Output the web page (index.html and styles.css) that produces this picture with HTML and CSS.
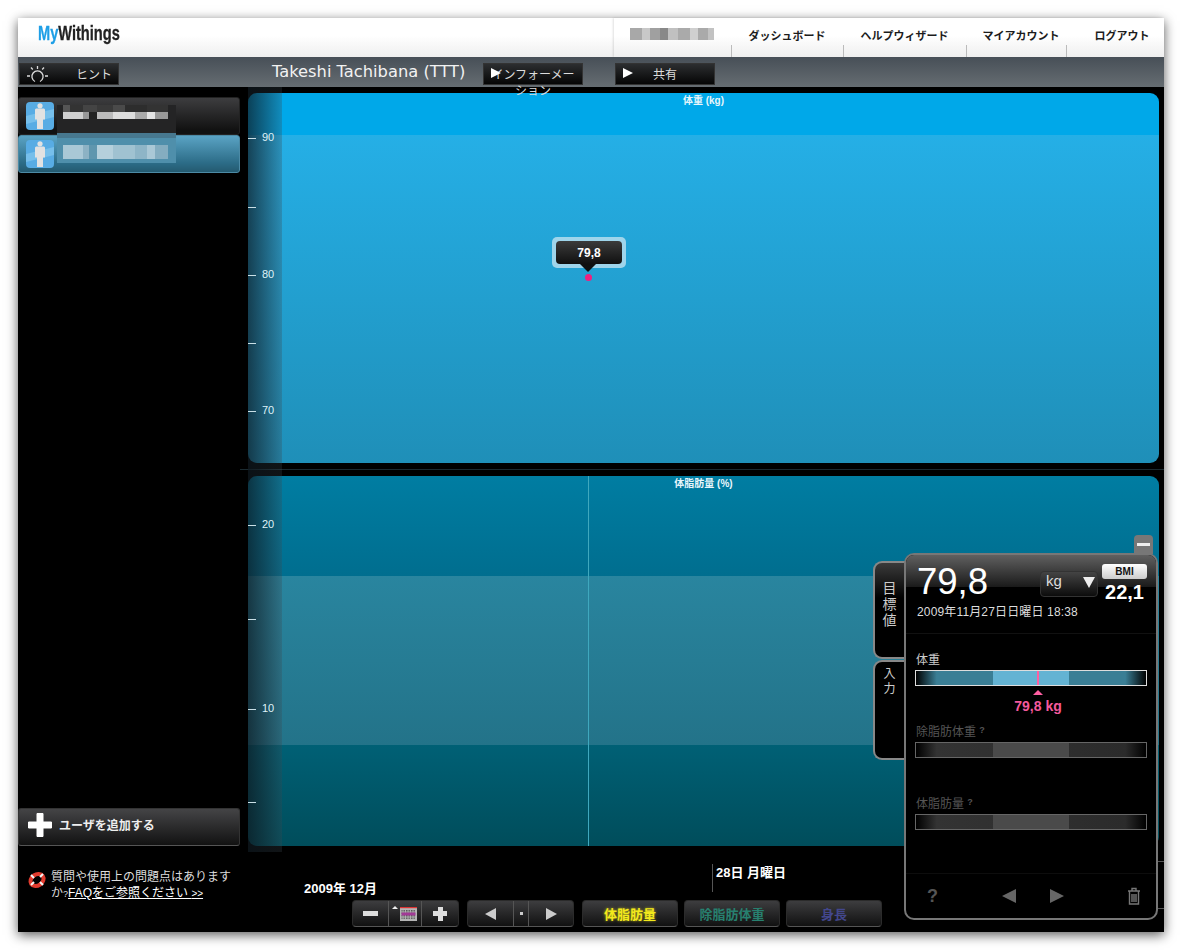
FILE: index.html
```html
<!DOCTYPE html>
<html lang="ja">
<head>
<meta charset="utf-8">
<title>MyWithings</title>
<link rel="stylesheet" href="styles.css">
</head>
<body>
<div class="window">
  <header class="header">
    <div class="logo"><span class="logo-my">My</span>Withings</div>
    <nav class="nav">
      <div class="nav-item nav-user"><span class="mosaic-nav"></span></div>
      <a class="nav-item nav-w2">ダッシュボード</a>
      <a class="nav-item nav-w3">ヘルプウィザード</a>
      <a class="nav-item nav-w4">マイアカウント</a>
      <a class="nav-item nav-w5">ログアウト</a>
    </nav>
  </header>

  <div class="toolbar">
    <button class="tool-btn tool-hint">
      <svg class="bulb" width="32" height="20" viewBox="0 0 32 20"><g fill="none" stroke="#dcdcdc" stroke-width="1.3"><path d="M14 17.500a5.600 5.600 0 1 1 5 0"/><path d="M16.500 2v3M10 3.500l1.800 2M23 3.500l-1.800 2M6 12h3M24 12h3"/></g></svg>
      <span class="tool-label-hint">ヒント</span>
    </button>
    <h1 class="title">Takeshi Tachibana (TTT)</h1>
    <button class="tool-btn tool-info">
      <span class="play"></span>
      <span class="tool-info-text">インフォーメーション</span>
    </button>
    <button class="tool-btn tool-share">
      <span class="play"></span>
      <span class="tool-label-share">共有</span>
    </button>
  </div>

  <div class="main">
    <aside class="sidebar">
      <div class="user-row">
        <svg class="avatar" width="28" height="28" viewBox="0 0 28 28"><use href="#person"/></svg>
        <span class="mosaic"></span>
      </div>
      <div class="user-row user-active">
        <svg class="avatar" width="28" height="28" viewBox="0 0 28 28"><use href="#person"/></svg>
        <span class="mosaic mosaic-active"></span>
      </div>
      <button class="add-user">
        <svg width="26" height="26" viewBox="0 0 26 26"><path d="M10 1.500h6v8.500h8.500v6H16v8.500h-6V16H1.500v-6H10z" fill="#fff" stroke="#fff" stroke-linejoin="round"/></svg>
        <span>ユーザを追加する</span>
      </button>
      <div class="help">
        <svg class="buoy" width="20" height="20" viewBox="0 0 20 20"><ellipse cx="10" cy="10" rx="7" ry="5.500" transform="rotate(-35 10 10)" fill="none" stroke="#e23b2e" stroke-width="4"/><path d="M4 5l3 3M13 12l3 3M16 4l-3 3M4 15l3-3" stroke="#f4f4f4" stroke-width="2"/></svg>
        <p class="help-text">質問や使用上の問題点はありますか<span class="narrow">?</span><a class="help-link">FAQをご参照ください <span class="chev">&gt;&gt;</span></a></p>
      </div>
    </aside>

    <section class="stage">
      <div class="chart chart-top">
        <div class="chart-title">体重 <b>(kg)</b></div>
        <div class="band band-t1"></div>
        <div class="band band-t2"></div>
        <div class="tick tick-major t90"><i></i>90</div>
        <div class="tick t85"><i></i></div>
        <div class="tick tick-major t80"><i></i>80</div>
        <div class="tick t75"><i></i></div>
        <div class="tick tick-major t70"><i></i>70</div>
        <div class="bubble"><span class="bubble-inner">79,8</span></div>
        <span class="dot"></span>
      </div>
      <div class="separator"></div>
      <div class="chart chart-bottom">
        <div class="chart-title">体脂肪量 <b>(%)</b></div>
        <div class="band band-b1"></div>
        <div class="band band-b2"></div>
        <div class="band band-b3"></div>
        <span class="cursor"></span>
        <div class="tick tick-major t20"><i></i>20</div>
        <div class="tick t15"><i></i></div>
        <div class="tick tick-major t10"><i></i>10</div>
        <div class="tick t5"><i></i></div>
      </div>
      <div class="axis-shade"></div>

      <footer class="footer">
        <span class="date-month">2009年 12月</span>
        <span class="date-rule"></span>
        <span class="date-day">28日 月曜日</span>
        <span class="edge-mark edge-a"></span>
        <span class="edge-mark edge-b"></span>
        <div class="controls">
          <div class="btn-group group-zoom">
            <span class="seg seg-z1"><i class="minus"></i></span>
            <span class="seg seg-z2">
              <svg width="28" height="18" viewBox="0 0 28 18"><defs><pattern id="cal" width="2.500" height="2.500" patternUnits="userSpaceOnUse"><rect width="1.500" height="1.500" fill="#555"/></pattern></defs><path d="M1 4l3-3 3 3z" fill="#eee"/><rect x="9" y="2" width="17" height="14" fill="#b5b5b5"/><rect x="9" y="2" width="17" height="1.200" fill="#d33"/><rect x="10.500" y="5" width="14" height="9" fill="url(#cal)"/><rect x="10.500" y="7.500" width="14" height="3" fill="#a23a96"/></svg>
            </span>
            <span class="seg seg-z3"><i class="plus"></i></span>
          </div>
          <div class="btn-group group-nav">
            <span class="seg seg-n1"><i class="tri-left"></i></span>
            <span class="seg seg-n2"><i class="mid-dot"></i></span>
            <span class="seg seg-n3"><i class="tri-right"></i></span>
          </div>
          <button class="metric metric-fat">体脂肪量</button>
          <button class="metric metric-lean">除脂肪体重</button>
          <button class="metric metric-height">身長</button>
        </div>
      </footer>

      <div class="panel-min"><i></i></div>
      <div class="tab tab-goal">目<br>標<br>値</div>
      <div class="tab tab-input">入<br>力</div>

      <div class="panel">
        <div class="panel-head">
          <div class="panel-value">79,8</div>
          <div class="unit"><span>kg</span><i class="unit-arrow"></i></div>
          <div class="bmi">
            <span class="bmi-pill">BMI</span>
            <span class="bmi-value">22,1</span>
          </div>
        </div>
        <div class="panel-date">2009年11月27日日曜日 18:38</div>
        <div class="panel-body">
          <div class="metric-row metric-row-on">
            <div class="metric-label">体重</div>
            <div class="range"><span class="range-mid"></span><span class="range-mark"></span></div>
            <div class="range-caret"></div>
            <div class="range-value">79,8 kg</div>
          </div>
          <div class="metric-row metric-row-off row-lean">
            <div class="metric-label">除脂肪体重 <sup>?</sup></div>
            <div class="range"><span class="range-mid"></span></div>
          </div>
          <div class="metric-row metric-row-off row-mass">
            <div class="metric-label">体脂肪量 <sup>?</sup></div>
            <div class="range"><span class="range-mid"></span></div>
          </div>
        </div>
        <div class="panel-foot">
          <span class="foot-q">?</span>
          <div class="foot-nav"><i class="foot-left"></i><i class="foot-right"></i></div>
          <svg width="14" height="18" viewBox="0 0 14 18"><g fill="none" stroke="#777" stroke-width="1.400"><path d="M1 4h12M5 4V1.500h4V4M2.500 4v13h9V4"/><path d="M5 7v8M7 7v8M9 7v8"/></g></svg>
        </div>
      </div>
    </section>
  </div>
</div>

<svg class="defs" width="0" height="0">
  <defs>
    <symbol id="person" viewBox="0 0 28 28">
      <rect width="28" height="28" rx="4" fill="#58ace4"/>
      <path d="M0 14L28 7v8L0 22z" fill="#76bfeb"/>
      <circle cx="14" cy="3.800" r="2.600" fill="#e2e2e2"/>
      <path d="M10 6.500h8l1 1v10h-2v9.500h-6v-9.500H9v-10z" fill="#e2e2e2"/>
    </symbol>
  </defs>
</svg>
</body>
</html>
```
FILE: styles.css
```css
* { box-sizing: border-box; }
html, body { margin: 0; padding: 0; height: 100%; }
body {
  background: #fff;
  padding: 18px;
  font-family: "Liberation Sans", "Noto Sans CJK JP", sans-serif;
  overflow: hidden;
}
button { font-family: inherit; padding: 0; cursor: default; }
.defs { position: absolute; }

.window {
  width: 1146px;
  height: 914px;
  background: #000;
  display: flex;
  flex-direction: column;
  box-shadow: 0 3px 11px rgba(0,0,0,.65);
}

/* header */
.header {
  height: 39px;
  background: linear-gradient(#fff, #fff 45%, #efefef);
  display: flex;
  justify-content: space-between;
  flex: none;
}
.logo {
  font: bold 20px "Liberation Sans", sans-serif;
  color: #222;
  padding: 4px 0 0 20px;
  transform: scaleX(.73);
  transform-origin: 20px 0;
  white-space: nowrap;
  -webkit-text-stroke: .3px currentColor;
}
.logo-my { color: #1f9fe6; }
.nav { display: flex; height: 39px; box-shadow: -1px 0 2px rgba(0,0,0,.12); }
.nav-item {
  position: relative;
  font-size: 11px;
  font-weight: bold;
  color: #1c1c1c;
  text-align: center;
  padding-top: 10px;
  line-height: 16px;
}
.nav-item::after {
  content: "";
  position: absolute;
  right: -1px;
  bottom: 0;
  height: 12px;
  border-right: 1px solid #bbb;
}
.nav-item:last-child::after { display: none; }
.nav-user { width: 117px; padding: 10px 0 0 16px; text-align: left; }
.nav-w2 { width: 112px; }
.nav-w3 { width: 123px; }
.nav-w4 { width: 100px; padding-left: 10px; }
.nav-w5 { width: 98px; padding-left: 14px; }
.mosaic-nav {
  display: block;
  width: 84px;
  height: 12px;
  background: linear-gradient(90deg, #a8a8a8 0 12px, #c8c8c8 12px 20px, #a0a0a0 20px 30px, #888 30px 38px, #c0c0c0 38px 48px, #aaa 48px 60px, #cfcfcf 60px 68px, #aaa 68px 78px, #c2c2c2 78px);
  filter: blur(.5px);
}

/* toolbar */
.toolbar {
  height: 30px;
  background: linear-gradient(#474f57, #666d72);
  display: flex;
  align-items: flex-start;
  padding-top: 6px;
  flex: none;
  position: relative;
  z-index: 3;
}
.tool-btn {
  position: relative;
  width: 100px;
  height: 22px;
  border: 1px solid #333;
  background: linear-gradient(#2c2e30, #050505);
  color: #ddd;
  font-size: 12px;
  line-height: 16px;
  flex: none;
}
.tool-hint { margin-left: 1px; }
.bulb { position: absolute; left: 1px; top: 0; }
.tool-label-hint { position: absolute; left: 56px; top: 3px; }
.title {
  margin: -3px 0 0 153px;
  width: 211px;
  font-size: 16.3px;
  font-weight: normal;
  font-family: "DejaVu Sans", sans-serif;
  color: #f2f2f2;
  line-height: 24px;
  white-space: nowrap;
}
.play {
  position: absolute;
  left: 7px;
  top: 4px;
  border-left: 10px solid #fff;
  border-top: 5px solid transparent;
  border-bottom: 5px solid transparent;
  z-index: 2;
}
.tool-info-text { position: absolute; left: 3px; top: 3px; width: 92px; text-align: center; }
.tool-share { margin-left: 32px; }
.tool-label-share { position: absolute; left: 37px; top: 3px; }

/* main */
.main { flex: 1; display: flex; min-height: 0; }
.sidebar {
  width: 222px;
  flex: none;
  display: flex;
  flex-direction: column;
  padding-top: 10px;
}
.user-row {
  height: 38px;
  border: 1px solid #222;
  border-radius: 3px;
  background: linear-gradient(#3d3d3f, #111 90%);
  position: relative;
  display: flex;
  align-items: center;
  padding-left: 7px;
}
.user-active {
  background: linear-gradient(#5aa3c4, #2c6c87 75%, #245a70);
  border-color: #4c8aa5;
}
.avatar { flex: none; }
.mosaic {
  position: absolute;
  left: 38px;
  top: 7px;
  width: 119px;
  height: 29px;
  background:
    linear-gradient(90deg, #d0d0d0 0 20px, #999 20px 26px, #222 26px 34px, #bbb 34px 50px, #ddd 50px 72px, #aaa 72px 84px, #e4e4e4 84px 92px, #999 92px) 6px 7px / 105px 7px no-repeat,
    linear-gradient(90deg, #555 0 7px, #333 7px 20px, #444 20px 34px, #3a3a3a 34px 50px, #4a4a4a 50px 62px, #2d2d2d 62px 84px, #333 84px) 6px 0 / 105px 7px no-repeat,
    #242425;
  filter: blur(.4px);
}
.mosaic-active {
  top: -3px;
  height: 30px;
  background:
    linear-gradient(90deg, #a9c8d6 0 20px, #8cb2c4 20px 26px, #5f96ae 26px 34px, #b5d0dc 34px 50px, #a0c2d1 50px 72px, #8eb5c7 72px 84px, #aac8d6 84px 92px, #84adc0 92px) 6px 12px / 105px 14px no-repeat,
    linear-gradient(#47788f 0 5px, #4f8fab 5px);
  filter: blur(.4px);
}
.add-user {
  margin-top: auto;
  height: 38px;
  display: flex;
  align-items: center;
  gap: 6px;
  padding: 0 0 5px 8px;
  border: 1px solid #333;
  border-bottom-color: #555;
  border-radius: 3px;
  background: linear-gradient(#444446, #121212);
  color: #eee;
  font-size: 12px;
  font-weight: bold;
}
.help {
  display: flex;
  gap: 4px;
  height: 86px;
  padding: 23px 5px 0 9px;
}
.buoy { flex: none; margin-top: 1px; }
.help-text {
  margin: 0;
  font-size: 12px;
  line-height: 16px;
  color: #ddd;
}
.narrow { font-size: 9px; }
.help-link { color: #fff; text-decoration: underline; }
.chev { font-size: 10px; }

/* stage */
.stage { position: relative; flex: 1; padding: 6px 5px 0 8px; }
.chart {
  position: relative;
  height: 370px;
  border-radius: 9px;
  overflow: hidden;
  display: flex;
  flex-direction: column;
}
.separator {
  height: 13px;
  margin-left: -8px;
  margin-right: -5px;
  background: linear-gradient(#000 6px, #1b2a30 6px 7px, #000 7px);
}
.chart-title {
  position: absolute;
  left: 0; right: 0; top: 1px;
  text-align: center;
  font-size: 10px;
  line-height: 13px;
  font-weight: bold;
  color: #e8f6fb;
  z-index: 1;
}
.chart-title b { font-weight: bold; }
.band-t1 { height: 42px; background: #00a8e9; }
.band-t2 { flex: 1; background: linear-gradient(#25afe6, #1f8fb8); }
.band-b1 { height: 100px; background: linear-gradient(#007da2, #006e8f); }
.band-b2 { height: 169px; background: linear-gradient(#29859f, #237389); }
.band-b3 { flex: 1; background: linear-gradient(#006075, #004d5b); }
.tick {
  position: absolute;
  left: 0;
  z-index: 2;
  min-height: 12px;
  color: #dff2f8;
  font-size: 11px;
  line-height: 12px;
  display: flex;
  align-items: center;
}
.tick i { width: 8px; height: 1px; background: #c9dfe6; margin: 2px 6px 0 0; }
.t90 { top: 38px; }
.t85 { top: 107px; }
.t80 { top: 175px; }
.t75 { top: 243px; }
.t70 { top: 311px; }
.t20 { top: 42px; }
.t15 { top: 136px; }
.t10 { top: 226px; }
.t5 { top: 319px; }
.bubble {
  position: absolute;
  left: 304px;
  top: 144px;
  width: 74px;
  height: 31px;
  background: rgba(190,225,240,.8);
  border-radius: 5px;
  padding: 4px;
}
.bubble-inner {
  display: block;
  position: relative;
  height: 23px;
  border-radius: 4px;
  background: linear-gradient(#3b3b3b, #101010);
  color: #fff;
  font-size: 12px;
  font-weight: bold;
  text-align: center;
  line-height: 24px;
}
.bubble-inner::after {
  content: "";
  position: absolute;
  left: 24px;
  top: 23px;
  border-left: 8px solid transparent;
  border-right: 8px solid transparent;
  border-top: 8px solid #101010;
}
.dot {
  position: absolute;
  left: 337px;
  top: 181px;
  width: 7px;
  height: 7px;
  border-radius: 50%;
  background: #f0207f;
}
.cursor {
  position: absolute;
  left: 340px;
  top: 0;
  bottom: 0;
  width: 1px;
  background: #3fa8be;
}
.axis-shade {
  position: absolute;
  left: 8px;
  top: 0;
  width: 34px;
  height: 765px;
  background: linear-gradient(90deg, rgba(15,25,32,.72), rgba(60,72,80,.28));
  pointer-events: none;
}

/* footer */
.footer { position: relative; height: 86px; padding: 54px 0 0 104px; }
.date-month {
  position: absolute;
  left: 56px;
  top: 35px;
  font-size: 13px;
  line-height: 16px;
  font-weight: bold;
  color: #fff;
}
.date-rule {
  position: absolute;
  left: 464px;
  top: 18px;
  width: 1px;
  height: 28px;
  background: #555;
}
.date-day {
  position: absolute;
  left: 468px;
  top: 19px;
  font-size: 13px;
  line-height: 16px;
  font-weight: bold;
  color: #fff;
}
.edge-mark { position: absolute; right: -5px; width: 6px; height: 1px; background: #555; }
.edge-a { top: 15px; }
.edge-b { top: 62px; }
.controls { display: flex; gap: 8px; height: 27px; }
.btn-group, .metric {
  height: 27px;
  border: 1px solid #2b2b2b;
  border-bottom-color: #555;
  border-radius: 4px;
  background: linear-gradient(#3d3d3f, #111);
}
.btn-group { display: flex; }
.seg { display: flex; align-items: center; justify-content: center; border-left: 1px solid #555; }
.seg:first-child { border-left: 0; }
.seg-z1 { width: 35px; }
.seg-z2 { width: 33px; }
.seg-z3 { width: 37px; }
.seg-n1 { width: 45px; }
.seg-n2 { width: 15px; }
.seg-n3 { width: 45px; }
.minus { width: 15px; height: 5px; background: #ddd; }
.plus {
  width: 14px;
  height: 14px;
  background:
    linear-gradient(#ddd, #ddd) center / 14px 5px no-repeat,
    linear-gradient(#ddd, #ddd) center / 5px 14px no-repeat;
}
.tri-left { border-right: 11px solid #ccc; border-top: 6px solid transparent; border-bottom: 6px solid transparent; }
.tri-right { border-left: 11px solid #ccc; border-top: 6px solid transparent; border-bottom: 6px solid transparent; }
.mid-dot { width: 3px; height: 3px; background: #ccc; }
.metric { width: 96px; font-size: 13px; font-weight: bold; }
.metric + .metric { margin-left: -2px; }
.metric-fat { color: #f3e91c; text-shadow: 0 0 3px rgba(243,233,28,.7); }
.metric-lean { color: #27806f; }
.metric-height { color: #43478c; }

/* floating panel */
.panel-min {
  position: absolute;
  left: 894px;
  top: 448px;
  width: 19px;
  height: 19px;
  border-radius: 4px 4px 0 0;
  background: #777;
  display: flex;
  align-items: center;
  justify-content: center;
}
.panel-min i { width: 13px; height: 3px; background: #eee; }
.tab {
  position: absolute;
  left: 633px;
  width: 34px;
  border: 2px solid #888;
  border-right: 0;
  border-radius: 9px 0 0 9px;
  background: #000;
  color: #ccc;
  text-align: center;
  padding-right: 3px;
}
.tab-goal {
  top: 474px;
  height: 98px;
  padding-top: 17px;
  font-size: 14px;
  line-height: 16px;
  background: linear-gradient(#3a3a3a, #000 35px);
}
.tab-input { top: 573px; height: 100px; padding-top: 5px; font-size: 12px; line-height: 15px; }
.panel {
  position: absolute;
  left: 664px;
  top: 466px;
  width: 254px;
  height: 367px;
  border: 2px solid #777;
  border-radius: 10px;
  background: #000;
  display: flex;
  flex-direction: column;
  z-index: 4;
}
.panel-head {
  height: 32px;
  flex: none;
  border-radius: 8px 8px 0 0;
  background: linear-gradient(#606060, #1a1a1a);
  display: flex;
  padding: 9px 0 0 11px;
  position: relative;
}
.panel-value { font-size: 36.500px; line-height: 36px; color: #fff; width: 123px; }
.unit {
  width: 58px;
  height: 26px;
  margin-top: 7px;
  border: 1px solid #333;
  border-radius: 4px;
  background: linear-gradient(#444, #0c0c0c);
  color: #ddd;
  font-size: 15px;
  line-height: 18px;
  padding-left: 5px;
  position: relative;
}
.unit-arrow {
  position: absolute;
  right: 2px;
  top: 5px;
  border-top: 11px solid #eee;
  border-left: 6px solid transparent;
  border-right: 6px solid transparent;
}
.bmi { display: flex; flex-direction: column; align-items: center; width: 45px; margin-left: 4px; }
.bmi-pill {
  width: 45px;
  height: 15px;
  border-radius: 3px;
  background: linear-gradient(#fff, #ccc);
  color: #111;
  font-size: 10px;
  font-weight: bold;
  line-height: 15px;
  text-align: center;
}
.bmi-value { font-size: 20px; font-weight: bold; color: #fff; line-height: 22px; margin-top: 2px; white-space: nowrap; }
.panel-date {
  height: 47px;
  flex: none;
  padding: 17px 0 0 11px;
  font-size: 12px;
  line-height: 16px;
  letter-spacing: .15px;
  color: #ddd;
  border-bottom: 1px solid #111;
}
.panel-body { flex: 1; padding: 18px 9px 0 9px; }
.metric-row { position: relative; }
.metric-label { font-size: 12px; line-height: 16px; color: #ccc; height: 18px; padding-left: 1px; }
.metric-label sup { font-size: 9px; vertical-align: 3px; line-height: 0; font-weight: bold; }
.metric-row-off .metric-label { color: #555; }
.range {
  height: 16px;
  position: relative;
  border: 1px solid #ddd;
  background: linear-gradient(90deg, #000, #3a7e95 9%, #3a7e95 91%, #000);
}
.range-mid { position: absolute; left: 77px; width: 76px; top: 0; bottom: 0; background: #64b3d3; }
.range-mark { position: absolute; left: 121px; width: 2px; top: 0; bottom: 0; background: #ff5fa2; }
.range-caret {
  width: 0;
  margin: 4px 0 0 118px;
  border-left: 5px solid transparent;
  border-right: 5px solid transparent;
  border-bottom: 5px solid #ff5fa2;
}
.range-value { text-align: center; color: #f4599c; font-size: 14px; font-weight: bold; line-height: 16px; margin: 3px 0 0 14px; }
.metric-row-off .range {
  border-color: #666;
  background: linear-gradient(90deg, #000, #333 9%, #2b2b2b 91%, #000);
}
.metric-row-off .range-mid { background: #4a4a4a; }
.row-lean { margin-top: 10px; }
.row-mass { margin-top: 38px; }
.panel-foot {
  height: 45px;
  flex: none;
  border-top: 1px solid #0d0d0d;
  display: flex;
  align-items: center;
  justify-content: space-between;
  padding: 0 15px 0 21px;
}
.foot-q { color: #555; font-size: 18px; font-weight: bold; }
.foot-nav { display: flex; gap: 34px; }
.foot-left { border-right: 14px solid #666; border-top: 7px solid transparent; border-bottom: 7px solid transparent; }
.foot-right { border-left: 14px solid #666; border-top: 7px solid transparent; border-bottom: 7px solid transparent; }
```
